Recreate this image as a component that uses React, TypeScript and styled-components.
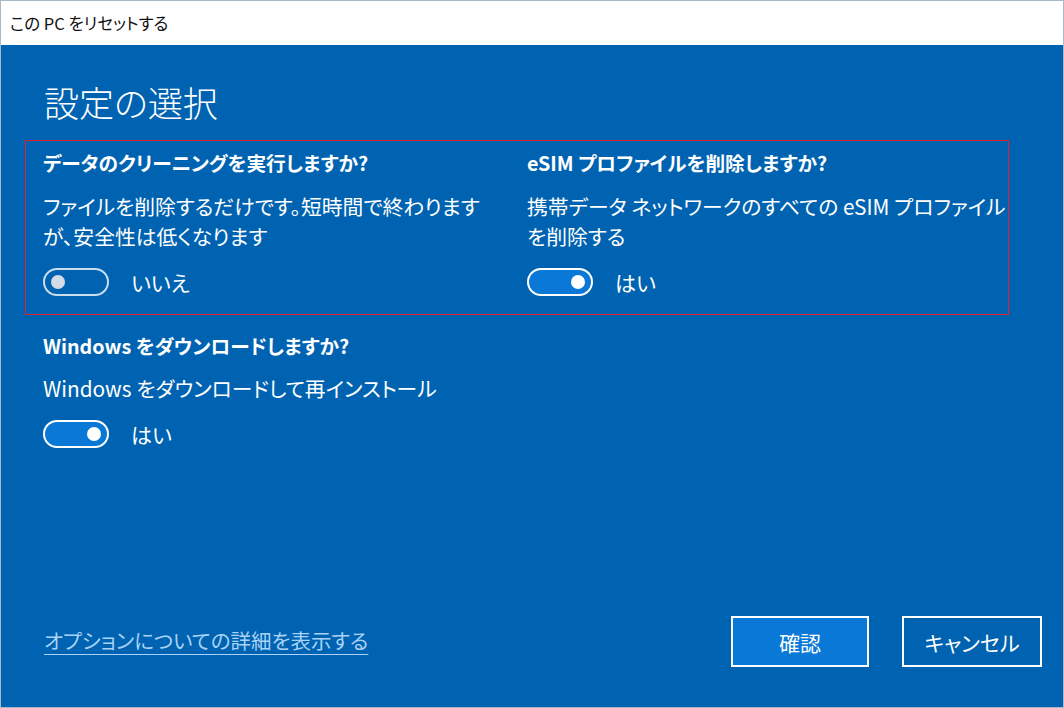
import React from "react";
import styled, { createGlobalStyle } from "styled-components";

const Global = createGlobalStyle`
  html, body { margin: 0; padding: 0; background: #ffffff; }
  * { box-sizing: border-box; }
  body {
    font-family: "Noto Sans CJK JP", "Noto Sans", sans-serif;
    font-feature-settings: "palt";
  }
`;

const Window = styled.div`
  width: 1064px;
  height: 708px;
  border: 1px solid #a9b8c8;
  display: flex;
  flex-direction: column;
  overflow: hidden;
`;

const TitleBar = styled.div`
  height: 44px;
  flex: none;
  display: flex;
  align-items: center;
  padding-left: 9px;
  background: #ffffff;
  color: #111111;
  font-size: 16.5px;
`;

const Body = styled.div`
  flex: 1;
  background: #0063b1;
  color: #ffffff;
  display: flex;
  flex-direction: column;
  padding: 0 21px 40px 42px;
`;

const Heading = styled.h1`
  margin: 36px 0 0 1px;
  font-size: 35px;
  font-weight: 300;
  line-height: 42px;
`;

const Highlight = styled.div`
  margin: 17px 0 0 -18px;
  width: 984px;
  border: 1px solid #e2232f;
  padding: 9px 0 18px 17px;
  display: grid;
  grid-template-columns: 484px 1fr;
`;

const Section = styled.div<{ $top?: number }>`
  display: flex;
  flex-direction: column;
  min-width: 0;
  margin-top: ${(p) => p.$top ?? 0}px;
`;

const Question = styled.div`
  font-size: 19.7px;
  font-weight: 700;
  line-height: 26px;
`;

const Description = styled.div<{ $gap?: number }>`
  margin-top: ${(p) => p.$gap ?? 15}px;
  font-size: 20.8px;
  line-height: 30px;
  white-space: nowrap;
`;

const ToggleRow = styled.div`
  margin-top: 17px;
  display: flex;
  align-items: center;
  gap: 22px;
  height: 28px;
`;

const Track = styled.div<{ $on: boolean }>`
  position: relative;
  width: 66px;
  height: 28px;
  border-radius: 14px;
  border: 2.5px solid ${(p) => (p.$on ? "#ffffff" : "#c9ddef")};
  background: ${(p) => (p.$on ? "#0a78d6" : "transparent")};
`;

const Knob = styled.span<{ $on: boolean }>`
  position: absolute;
  top: 4.5px;
  ${(p) => (p.$on ? "right: 6px;" : "left: 6px;")}
  width: 14px;
  height: 14px;
  border-radius: 50%;
  background: ${(p) => (p.$on ? "#ffffff" : "#d3dce6")};
`;

const ToggleLabel = styled.span`
  font-size: 21px;
  line-height: 28px;
`;

const Footer = styled.div`
  margin-top: auto;
  display: flex;
  align-items: center;
`;

const Link = styled.a`
  margin-left: 1px;
  margin-top: -3px;
  font-size: 20.5px;
  color: #a8d2f6;
  text-decoration: underline;
  text-underline-offset: 5px;
  text-decoration-thickness: 1px;
  cursor: pointer;
`;

const Buttons = styled.div`
  margin-left: auto;
  display: flex;
  gap: 33px;
`;

const Button = styled.button<{ $primary?: boolean; $w: number }>`
  width: ${(p) => p.$w}px;
  height: 51px;
  border: 2.5px solid #ffffff;
  background: ${(p) => (p.$primary ? "#0a78d6" : "#0063b1")};
  color: #ffffff;
  font-family: inherit;
  font-feature-settings: "palt";
  font-size: 21px;
  padding: 0;
  cursor: pointer;
`;

function Toggle({ on, label }: { on: boolean; label: string }) {
  return (
    <ToggleRow>
      <Track $on={on}>
        <Knob $on={on} />
      </Track>
      <ToggleLabel>{label}</ToggleLabel>
    </ToggleRow>
  );
}

export default function App() {
  return (
    <>
      <Global />
      <Window>
        <TitleBar>この PC をリセットする</TitleBar>
        <Body>
          <Heading>設定の選択</Heading>
          <Highlight>
            <Section>
              <Question>データのクリーニングを実行しますか?</Question>
              <Description>
                ファイルを削除するだけです。短時間で終わります
                <br />
                が、安全性は低くなります
              </Description>
              <Toggle on={false} label="いいえ" />
            </Section>
            <Section>
              <Question>eSIM プロファイルを削除しますか?</Question>
              <Description>
                携帯データ ネットワークのすべての eSIM プロファイル
                <br />
                を削除する
              </Description>
              <Toggle on={true} label="はい" />
            </Section>
          </Highlight>
          <Section $top={18}>
            <Question>Windows をダウンロードしますか?</Question>
            <Description $gap={14}>Windows をダウンロードして再インストール</Description>
            <Toggle on={true} label="はい" />
          </Section>
          <Footer>
            <Link>オプションについての詳細を表示する</Link>
            <Buttons>
              <Button $primary $w={138}>確認</Button>
              <Button $w={140}>キャンセル</Button>
            </Buttons>
          </Footer>
        </Body>
      </Window>
    </>
  );
}
